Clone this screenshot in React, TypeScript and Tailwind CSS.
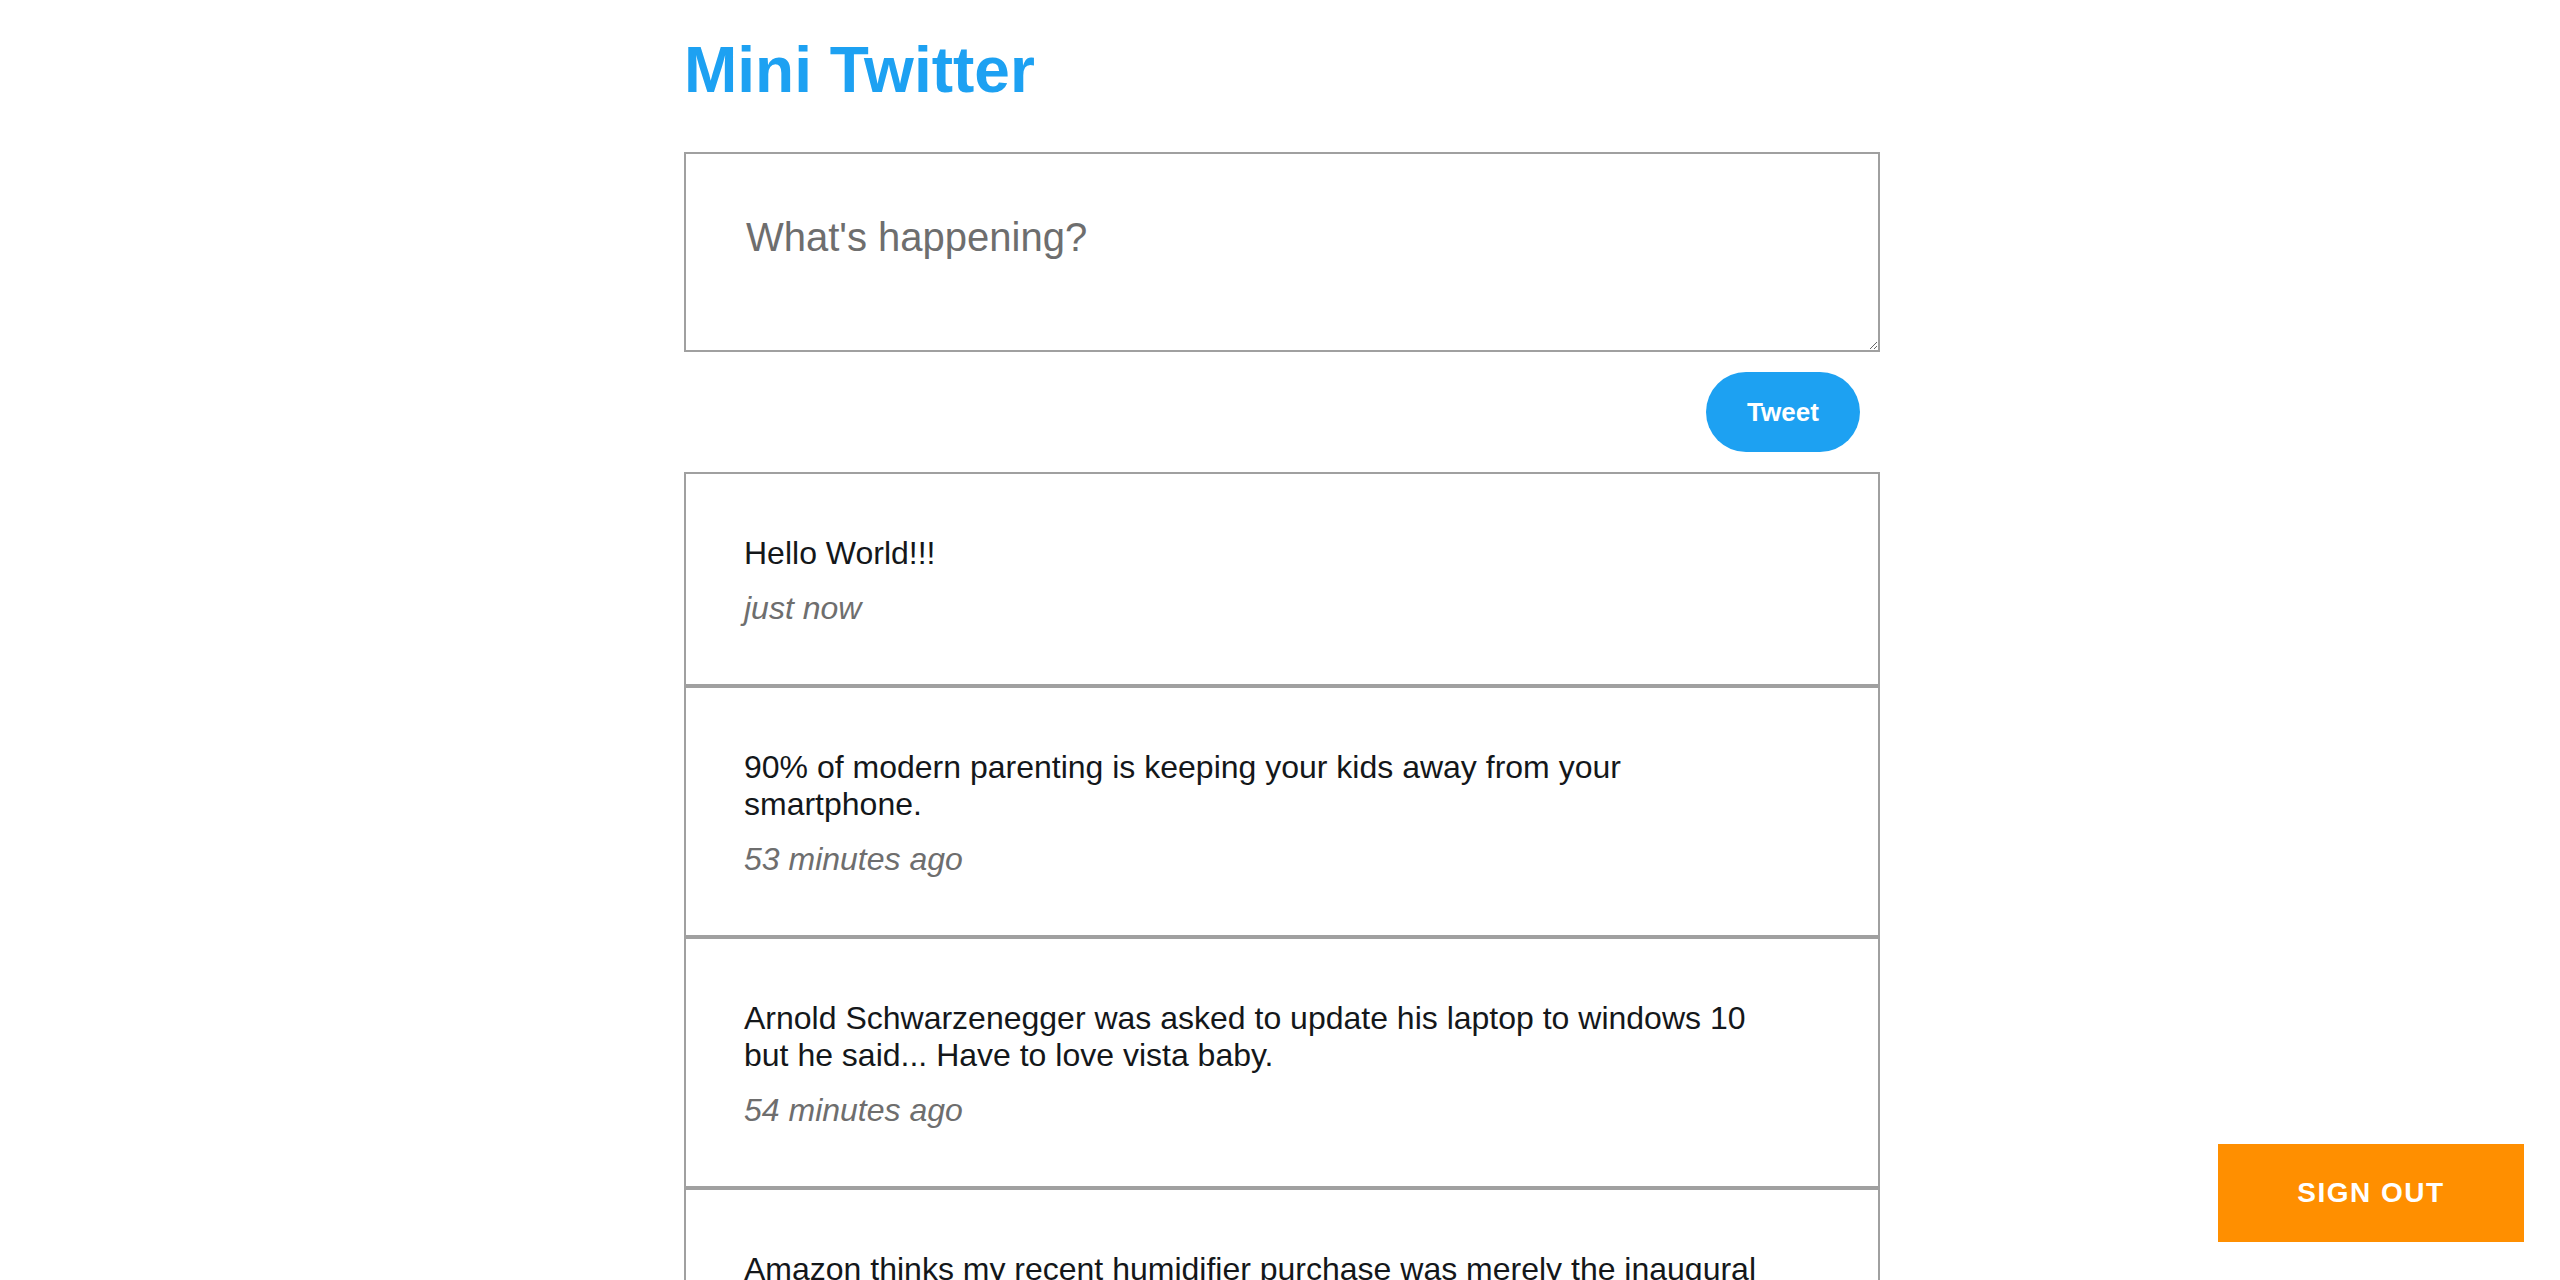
import React from "react";

const tweets = [
  { text: "Hello World!!!", time: "just now" },
  {
    text: "90% of modern parenting is keeping your kids away from your smartphone.",
    time: "53 minutes ago",
  },
  {
    text: "Arnold Schwarzenegger was asked to update his laptop to windows 10 but he said... Have to love vista baby.",
    time: "54 minutes ago",
  },
  {
    text: "Amazon thinks my recent humidifier purchase was merely the inaugural purchase of what will surely become a vast humidifier collection.",
    time: "1 hour ago",
  },
];

export default function App() {
  return (
    <div className="h-screen overflow-hidden bg-white font-['Liberation_Sans',Arial,sans-serif]">
      <div className="mx-auto w-[1200px] pl-[4px]">
        <h1 className="pt-[33px] mb-[45px] text-[64px] leading-[74px] font-bold text-[#1da1f2]">
          Mini Twitter
        </h1>
        <textarea
          className="block w-full h-[200px] border-2 border-[#a0a0a0] pt-[60px] pl-[60px] pr-[60px] text-[40px] leading-[46px] text-[#14171a] placeholder:text-[#6e6e6e] outline-none"
          placeholder="What's happening?"
        />
        <div className="flex justify-end pr-[20px] pt-[20px] pb-[20px]">
          <button className="w-[154px] h-[80px] rounded-full bg-[#1da1f2] text-white text-[26px] font-bold">
            Tweet
          </button>
        </div>
        <div className="flex flex-col">
          {tweets.map((t, i) => (
            <div
              key={i}
              className="border-2 border-[#a0a0a0] pl-[58px] pr-[90px] pt-[61px] pb-[57px]"
            >
              <p className="text-[32px] leading-[37px] text-[#14171a]">{t.text}</p>
              <p className="mt-[18px] text-[32px] leading-[37px] italic text-[#6e6e6e]">
                {t.time}
              </p>
            </div>
          ))}
        </div>
      </div>
      <button className="fixed right-[36px] bottom-[38px] w-[306px] h-[98px] bg-[#ff8f00] text-white text-[28px] font-bold tracking-[1.5px] uppercase">
        Sign out
      </button>
    </div>
  );
}
